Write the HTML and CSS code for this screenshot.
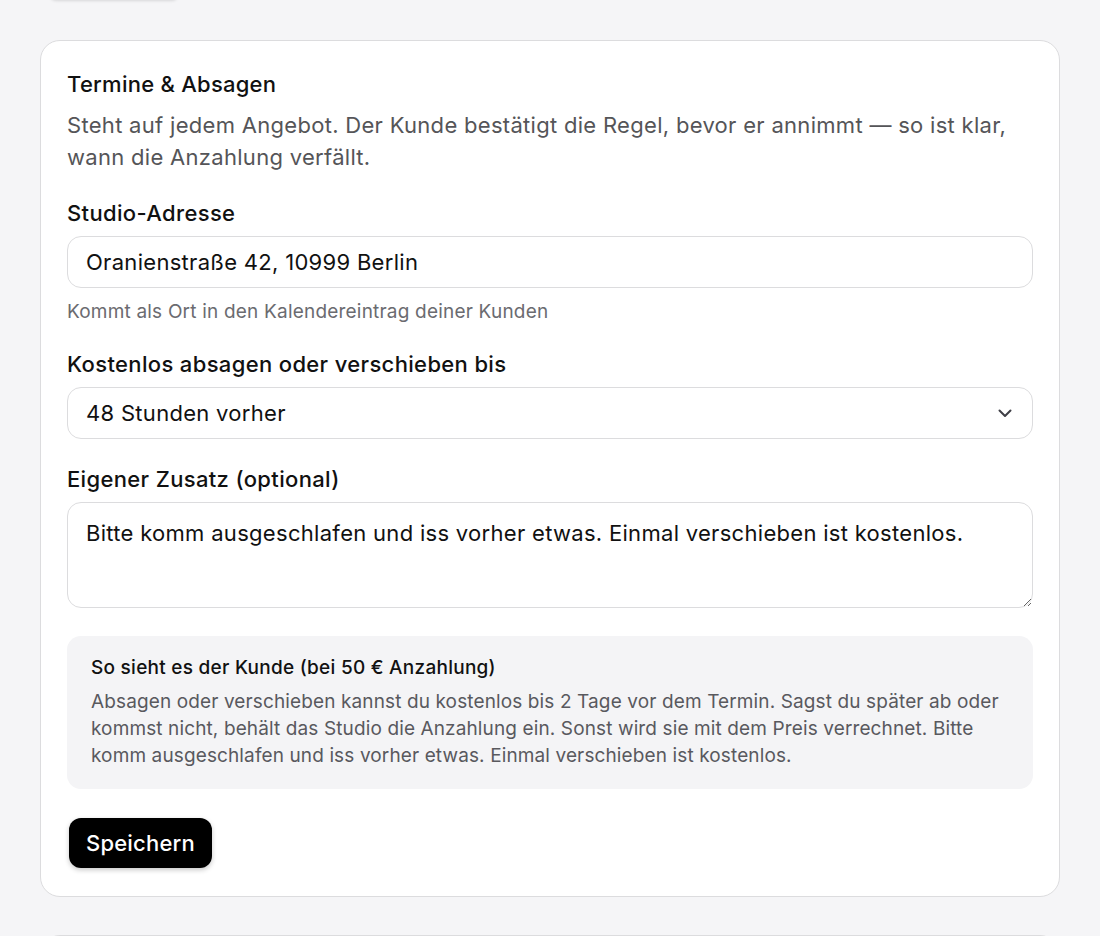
FILE: index.html
```html
<!DOCTYPE html>
<html lang="de">
<head>
<meta charset="utf-8">
<title>Termine &amp; Absagen</title>
<link rel="stylesheet" href="styles.css">
</head>
<body>
<div class="page">
  <div class="prev-btn"></div>
  <section class="card">
    <h2 class="card-title">Termine &amp; Absagen</h2>
    <p class="card-desc">Steht auf jedem Angebot. Der Kunde bestätigt die Regel, bevor er annimmt — so ist klar, wann die Anzahlung verfällt.</p>

    <div class="field">
      <label class="label" for="addr">Studio-Adresse</label>
      <input class="input" id="addr" type="text" value="Oranienstraße 42, 10999 Berlin">
      <p class="hint">Kommt als Ort in den Kalendereintrag deiner Kunden</p>
    </div>

    <div class="field">
      <label class="label" for="cancel">Kostenlos absagen oder verschieben bis</label>
      <div class="select-wrap">
        <select class="input select" id="cancel">
          <option>48 Stunden vorher</option>
        </select>
        <svg class="chevron" width="18" height="18" viewBox="0 0 18 18" aria-hidden="true"><path d="M3.5 6.5 L9 12 L14.5 6.5" fill="none" stroke="#3f3f46" stroke-width="2" stroke-linecap="round" stroke-linejoin="round"/></svg>
      </div>
    </div>

    <div class="field">
      <label class="label" for="extra">Eigener Zusatz (optional)</label>
      <textarea class="input textarea" id="extra">Bitte komm ausgeschlafen und iss vorher etwas. Einmal verschieben ist kostenlos.</textarea>
    </div>

    <div class="preview">
      <h3 class="preview-title">So sieht es der Kunde (bei 50 € Anzahlung)</h3>
      <p class="preview-text">Absagen oder verschieben kannst du kostenlos bis 2 Tage vor dem Termin. Sagst du später ab oder kommst nicht, behält das Studio die Anzahlung ein. Sonst wird sie mit dem Preis verrechnet. Bitte komm ausgeschlafen und iss vorher etwas. Einmal verschieben ist kostenlos.</p>
    </div>

    <div class="actions">
      <button class="btn" type="button">Speichern</button>
    </div>
  </section>
  <section class="card next-card"></section>
</div>
</body>
</html>
```

FILE: styles.css
```css
* { box-sizing: border-box; }

html, body {
  margin: 0;
  padding: 0;
  background: #f5f5f7;
  font-family: Inter, "Noto Sans", "Liberation Sans", sans-serif;
  color: #111;
  overflow: hidden;
}

.page {
  padding: 0 40px;
  height: 936px;
  overflow: hidden;
}

.prev-btn {
  width: 128px;
  height: 6px;
  margin: -6px 0 0 10px;
  border-radius: 0 0 10px 10px;
  background: #f5f5f7;
  box-shadow: 0 1px 3px rgba(0,0,0,0.12);
}

.card {
  background: #fff;
  border: 1px solid #dcdcde;
  border-radius: 20px;
  padding: 28px 26px 28px 26px;
  margin-top: 40px;
}

.next-card {
  margin-top: 38px;
  height: 60px;
  padding: 0;
}

.card-title {
  margin: 0;
  font-size: 22px;
  line-height: 30px;
  font-weight: 500;
  letter-spacing: 0.25px;
  color: #111;
}

.card-desc {
  margin: 10px 0 0;
  font-size: 22px;
  line-height: 32px;
  letter-spacing: 0.3px;
  color: #555558;
}

.field {
  margin-top: 25px;
}

.label {
  display: block;
  font-size: 22px;
  line-height: 30px;
  font-weight: 500;
  letter-spacing: 0.35px;
  color: #111;
  margin-bottom: 8px;
}

.input {
  display: block;
  width: 100%;
  height: 52px;
  border: 1px solid #dcdcde;
  border-radius: 14px;
  background: #fff;
  padding: 0 18px;
  font-family: inherit;
  font-size: 22px;
  letter-spacing: 0.3px;
  color: #111;
  outline: none;
}

.hint {
  margin: 12px 0 0;
  font-size: 19px;
  line-height: 24px;
  letter-spacing: 0.2px;
  color: #6b6b70;
}

.select-wrap {
  position: relative;
}

.select {
  appearance: none;
  -webkit-appearance: none;
  height: 52px;
}

.chevron {
  position: absolute;
  right: 19px;
  top: 17px;
  pointer-events: none;
}

.textarea {
  height: 106px;
  padding: 15px 18px;
  line-height: 30px;
  resize: vertical;
}

.preview {
  margin-top: 28px;
  background: #f4f4f6;
  border-radius: 14px;
  padding: 19px 24px 20px;
}

.preview-title {
  margin: 0;
  font-size: 19px;
  line-height: 26px;
  font-weight: 500;
  letter-spacing: 0.26px;
  color: #111;
}

.preview-text {
  margin: 7px 0 0;
  font-size: 19px;
  line-height: 27px;
  letter-spacing: 0.12px;
  color: #59595e;
}

.actions {
  margin-top: 29px;
  padding-left: 2px;
}

.btn {
  height: 50px;
  padding: 0 17px;
  background: #000;
  color: #fff;
  border: none;
  border-radius: 12px;
  font-family: inherit;
  font-size: 22px;
  font-weight: 500;
  letter-spacing: 0.2px;
  box-shadow: 0 2px 5px rgba(0,0,0,0.22);
  cursor: pointer;
}
```
